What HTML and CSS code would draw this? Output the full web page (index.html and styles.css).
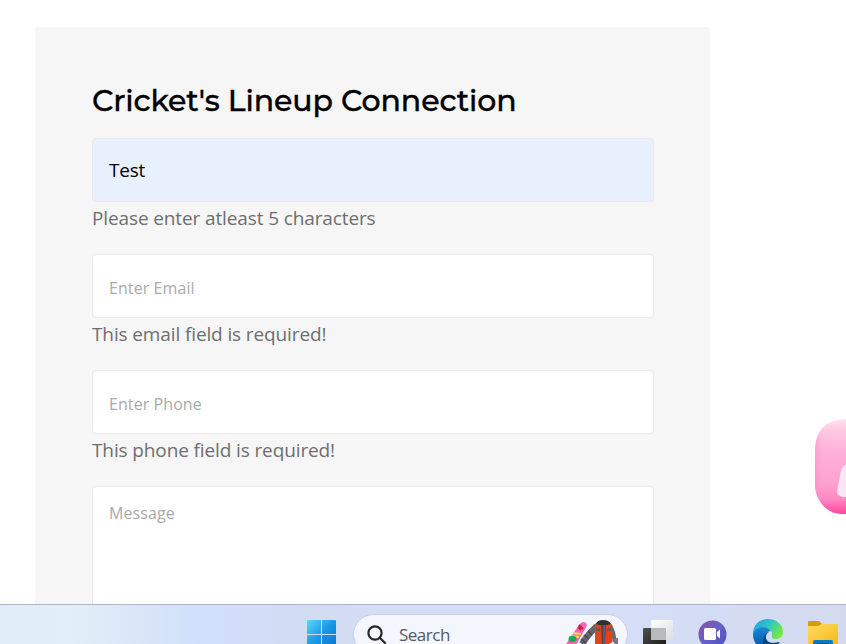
FILE: index.html
```html
<!DOCTYPE html>
<html lang="en">
<head>
<meta charset="utf-8">
<title>Cricket's Lineup Connection</title>
<link rel="stylesheet" href="styles.css">
</head>
<body>
<main class="page">
  <form class="card">
    <h1 class="title"><span class="title-text">Cricket's Lineup Connection</span></h1>
    <div class="field">
      <div class="control filled">Test</div>
      <p class="error">Please enter atleast 5 characters</p>
    </div>
    <div class="field">
      <div class="control hint">Enter Email</div>
      <p class="error">This email field is required!</p>
    </div>
    <div class="field">
      <div class="control hint">Enter Phone</div>
      <p class="error">This phone field is required!</p>
    </div>
    <div class="control hint message">Message</div>
  </form>
</main>
<svg class="widget" width="32" height="98" viewBox="0 0 32 98">
  <defs>
    <linearGradient id="pk" x1="0" y1="0" x2="0" y2="1">
      <stop offset="0" stop-color="#ffe3ef"/><stop offset=".1" stop-color="#ffcbe2"/><stop offset=".3" stop-color="#ffb4da"/>
      <stop offset=".65" stop-color="#ffa3d0"/><stop offset=".84" stop-color="#ff8bc3"/><stop offset=".94" stop-color="#ff5fab"/><stop offset="1" stop-color="#fa469e"/>
    </linearGradient>
    <linearGradient id="edge" x1="0" x2="1"><stop offset="0" stop-color="#ff7fbc" stop-opacity=".4"/><stop offset=".25" stop-color="#ff9bcb" stop-opacity="0"/></linearGradient>
  </defs>
  <path d="M32 1C12 1 1 13 1 33V66C1 82 12 96 28 96H32Z" fill="url(#pk)"/>
  <path d="M32 1C12 1 1 13 1 33V66C1 82 12 96 28 96H32Z" fill="url(#edge)"/>
  <path d="M32 47C28 48 27 52 26 58L23 73C23 77 26 79 32 79Z" fill="#ffe6f4"/>
</svg>
<footer class="taskbar">
  <svg class="start" width="30" height="29" viewBox="0 0 30 29">
    <defs><linearGradient id="win" x1="0" y1="0" x2="1" y2="1"><stop offset="0" stop-color="#5fd6fc"/><stop offset=".5" stop-color="#1997e4"/><stop offset="1" stop-color="#0671cf"/></linearGradient></defs>
    <path d="M1 0H14V14H0V1Q0 0 1 0ZM15 0H28Q29 0 29 1V14H15ZM0 15H14V29H0ZM15 15H29V29H15Z" fill="url(#win)"/>
  </svg>
  <div class="search">
    <svg class="glass" width="20" height="20" viewBox="0 0 20 20"><circle cx="8" cy="8" r="6.6"/><path d="M12.800 12.800L18 18"/></svg>
    <span class="search-label">Search</span>
    <svg class="art" width="56" height="27" viewBox="0 0 56 27">
      <path d="M0 27L15 5Q19 0 22 3Q24 5 21 9L11 27Z" fill="#f765b8"/>
      <path d="M15 5L19 9M14 7L17 10" stroke="#d91c45" stroke-width="2"/>
      <path d="M9 13L17 14M7 16L15 17" stroke="#ffe038" stroke-width="2"/>
      <ellipse cx="8.500" cy="19" rx="4" ry="3.200" fill="#16af55"/>
      <path d="M18 24L22 18L27 12L33 6" fill="none" stroke="#62636f" stroke-width="6.500" stroke-linejoin="round"/>
      <path d="M17 19L22 23M20 15L25 19M24 11L28 15" stroke="#454653" stroke-width="1.400"/>
      <path d="M46 5L49 12L51 22" fill="none" stroke="#656779" stroke-width="4"/>
      <path d="M49 19L54 18V24L51 25Z" fill="#747688"/>
      <path d="M31 4L35 2H44L48 5L48.500 22L45 24H31Z" fill="#e44218"/>
      <path d="M37 3H42L41 24H38Z" fill="#4b4650"/>
      <path d="M32 4Q33 0 39 0Q45 0 47 4L43 5H35Z" fill="#302c38"/>
      <path d="M40 5V24" stroke="#77717c"/>
      <path d="M32 9L36 10M43 10L47 9" stroke="#75505a" stroke-width="3"/>
    </svg>
  </div>
  <svg class="taskview" width="31" height="25" viewBox="0 0 31 25">
    <defs><linearGradient id="dark" x1="0" y1="0" x2="1" y2="1"><stop offset="0" stop-color="#505050"/><stop offset="1" stop-color="#171717"/></linearGradient>
    <linearGradient id="pale" x1="0" y1="0" x2="1" y2="1"><stop offset="0" stop-color="#fff"/><stop offset="1" stop-color="#dcdddf"/></linearGradient></defs>
    <rect y="8" width="23" height="20" rx="1" fill="url(#dark)"/><rect x="8" width="22" height="20" rx="1" fill="url(#pale)"/><path d="M8 8H23V20H8Z" fill="#b9babb"/>
  </svg>
  <svg class="chat" width="29" height="25" viewBox="0 0 29 25">
    <defs><linearGradient id="vio" x1="0" y1="0" x2="1" y2="1"><stop offset="0" stop-color="#8750aa"/><stop offset=".5" stop-color="#6660c9"/><stop offset="1" stop-color="#4a4fba"/></linearGradient></defs>
    <circle cx="14.500" cy="14.500" r="14" fill="url(#vio)"/><rect x="6" y="8" width="12" height="12" rx="1.500" fill="#fff"/><path d="M19 12L22 9.500V18.500L19 16Z" fill="#fff"/>
  </svg>
  <svg class="edge" width="31" height="26" viewBox="0 0 31 26">
    <defs><linearGradient id="eg" x1="0" y1="0" x2="1" y2=".5"><stop offset="0" stop-color="#1d9bd9"/><stop offset=".5" stop-color="#2cc4cb"/><stop offset="1" stop-color="#72e746"/></linearGradient>
    <linearGradient id="eb" x1="0" y1="0" x2="0" y2="1"><stop offset="0" stop-color="#1689d7"/><stop offset="1" stop-color="#095fad"/></linearGradient></defs>
    <path d="M0 15C0 5 7 0 15 0C24 0 30 6 30 13C30 18 26 20 23 20C19 20 18 18 19 16C20 10 13 8 8 10C4 11 1 13 0 15Z" fill="url(#eg)"/>
    <path d="M0 15C2 7 14 6 18 12C14 12 12 15 13 19C14 23 18 25 26 23L25 26H4C1 23 0 19 0 15Z" fill="url(#eb)"/>
    <path d="M10 26C9 19 12 13 18 12C14 13 12 17 13 20C14 24 20 26 27 23L25 26Z" fill="#0c4681"/>
  </svg>
  <svg class="folder" width="31" height="23" viewBox="0 0 31 23">
    <defs><linearGradient id="yl" x1="0" y1="0" x2="1" y2="1"><stop offset="0" stop-color="#ffdb60"/><stop offset="1" stop-color="#f7b91b"/></linearGradient></defs>
    <path d="M0 1Q0 0 1 0H10Q12 0 13 2L14 3L10 7H0Z" fill="#d89b08"/><path d="M0 5H9Q11 5 12 4L14 3H29Q30 3 30 4V23H0Z" fill="url(#yl)"/><path d="M5 23V21Q5 19 7 19H23Q25 19 25 21V23Z" fill="#087bc7"/><path d="M9 22H21V23H9Z" fill="#064b83"/>
  </svg>
</footer>
</body>
</html>
```
FILE: styles.css
```css
* { box-sizing: border-box; }
body {
  margin: 0;
  width: 846px;
  height: 644px;
  overflow: hidden;
  display: flex;
  flex-direction: column;
  background: #fff;
  font-family: "Open Sans", sans-serif;
}
.page { height: 604px; overflow: hidden; padding: 27px 0 0 35px; }
.card {
  width: 675px;
  height: 640px;
  padding: 54px 56px 0 57px;
  background: #f6f6f6;
  border-radius: 4px;
}
.title {
  margin: 0;
  height: 57px;
  font: 500 30px/40px Montserrat, Inter, sans-serif;
  color: #000;
  white-space: nowrap;
}
.title-text { letter-spacing: -0.1px; -webkit-text-stroke: 0.35px #000; }
.field { height: 116px; }
.control {
  height: 64px;
  padding: 0 16px;
  border: 1px solid #e9e9e9;
  border-radius: 4px;
  background: #fff;
  line-height: 62px;
}
.filled { background: #e8f0fe; font-size: 19px; letter-spacing: -0.2px; color: #000; }
.hint { font-size: 16px; line-height: 66px; letter-spacing: 0.08px; color: #aaa; }
.message { height: 140px; line-height: 52px; }
.error { margin: 0; font-size: 19px; line-height: 32px; letter-spacing: -0.12px; color: #6e6e6e; white-space: nowrap; }
.widget { position: absolute; left: 814px; top: 418px; }
.taskbar {
  height: 40px;
  display: flex;
  align-items: flex-start;
  overflow: hidden;
  border-top: 1px solid #adb4c4;
  background: linear-gradient(90deg, #e0edf8 0, #e2eff8 70px, #d8e5f8 150px, #d0e0fb 200px, #d4dcf7 265px, #d2dcf1 300px, #d5ddf4 420px, #d5def6 640px, #d4daee 846px);
}
.taskbar svg { flex: none; }
.start { margin: 15px 0 0 307px; }
.search {
  display: flex;
  align-items: flex-start;
  flex: none;
  width: 275px;
  height: 41px;
  margin: 9px 0 0 16px;
  padding-left: 13px;
  border: 1px solid #c5d0e6;
  border-radius: 21px;
  background: #f3f6fd;
}
.glass { margin-top: 10px; fill: none; stroke: #272727; stroke-width: 2.2; stroke-linecap: round; }
.search-label { margin: 10px 0 0 12px; width: 165px; font: 17px/19px "Open Sans", sans-serif; letter-spacing: -0.5px; color: #555962; }
.art { margin-top: 5px; }
.taskview { margin: 15px 0 0 15px; }
.chat { margin: 15px 0 0 24px; }
.edge { margin: 14px 0 0 26px; }
.folder { margin: 16px 0 0 24px; }
```
